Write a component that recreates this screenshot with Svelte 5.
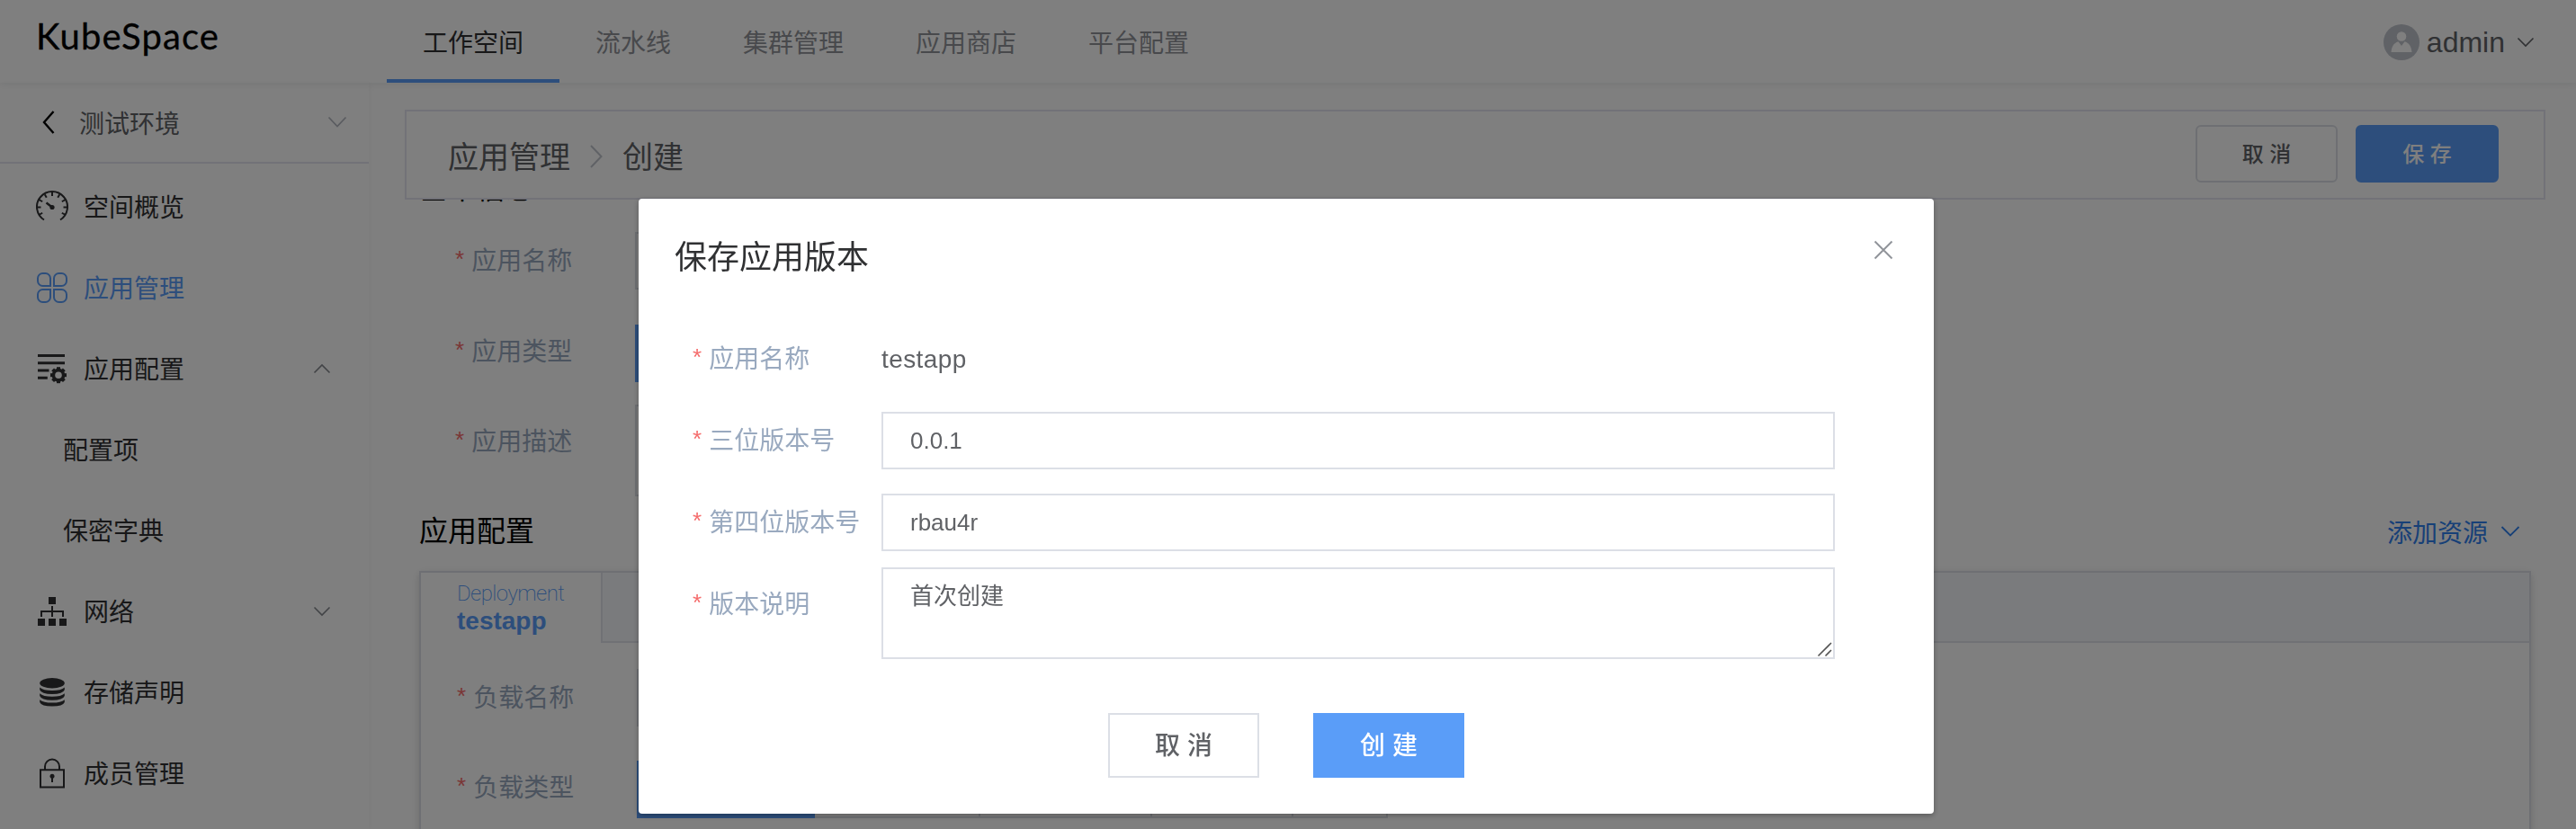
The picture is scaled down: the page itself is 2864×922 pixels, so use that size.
<script>
  const nav = ['工作空间', '流水线', '集群管理', '应用商店', '平台配置'];
  const menu = [
    { icon: 'gauge', label: '空间概览' },
    { icon: 'apps', label: '应用管理', active: true },
    { icon: 'config', label: '应用配置', arrow: 'up' },
    { label: '配置项', sub: true },
    { label: '保密字典', sub: true },
    { icon: 'network', label: '网络', arrow: 'down' },
    { icon: 'disk', label: '存储声明' },
    { icon: 'lock', label: '成员管理' }
  ];
  const ticks = [-180, -150, -120, -90, -60, -30, 0, 30, -210].map((d) => (d * Math.PI) / 180);
  const teeth = [0, 45, 90, 135, 180, 225, 270, 315];
  const segments = [184, 191, 157, 105];
</script>

<div class="page">
  <header>
    <div class="logo">KubeSpace</div>
    <nav>
      {#each nav as item, i}
        <span class:active={i === 0}>{item}</span>
      {/each}
    </nav>
    <div class="user">
      <svg class="avatar" width="40" height="40" viewBox="0 0 40 40">
        <circle cx="20" cy="20" r="20" fill="#c0c4cc" />
        <circle cx="20" cy="13.5" r="5.3" fill="#fff" />
        <path d="M8.5 31C9 24.5 12 20.500 16.500 19.300L20 24l3.500-4.700C28 20.500 31 24.500 31.500 31Z" fill="#fff" />
      </svg>
      <span>admin</span>
      <svg width="20" height="12" viewBox="0 0 20 12" fill="none" stroke="#606266" stroke-width="1.600"><path d="M1.500 1.500L10 10l8.500-8.500" /></svg>
    </div>
  </header>

  <div class="body">
    <aside>
      <div class="space">
        <svg width="16" height="28" viewBox="0 0 16 28" fill="none" stroke="#000" stroke-width="2.400"><path d="M13.500 2L3 14l10.500 12" /></svg>
        <span>测试环境</span>
        <svg width="22" height="14" viewBox="0 0 22 14" fill="none" stroke="#b4b8c0" stroke-width="1.800"><path d="M1.500 1.500L11 11.500l9.500-10" /></svg>
      </div>
      <ul>
        {#each menu as m}
          <li class:active={m.active} class:sub={m.sub}>
            {#if m.icon}
              <svg class="icon" width="36" height="36" viewBox="0 0 36 36" fill="none" stroke="currentColor" stroke-width="2">
                {#if m.icon === 'gauge'}
                  <path d="M9 32.500A17 17 0 1 1 27 32.500" />
                  {#each ticks as a}
                    <path d="M{18 + 16.500 * Math.cos(a)} {18.500 + 16.500 * Math.sin(a)}L{18 + 12.500 * Math.cos(a)} {18.500 + 12.500 * Math.sin(a)}" />
                  {/each}
                  <path d="M11.500 13.500L18 18.500" stroke-width="2.400" />
                  <circle cx="18" cy="18.500" r="2.600" fill="currentColor" stroke="none" />
                {:else if m.icon === 'apps'}
                  <path d="M16 16H7.500A5.500 5.500 0 0 1 2 10.500V7.500A5.500 5.500 0 0 1 7.500 2H10.500A5.500 5.500 0 0 1 16 7.500Z" />
                  <path d="M20 16H28.500A5.500 5.500 0 0 0 34 10.500V7.500A5.500 5.500 0 0 0 28.500 2H25.500A5.500 5.500 0 0 0 20 7.500Z" />
                  <path d="M16 20H7.500A5.500 5.500 0 0 0 2 25.500V28.500A5.500 5.500 0 0 0 7.500 34H10.500A5.500 5.500 0 0 0 16 28.500Z" />
                  <path d="M20 20H28.500A5.500 5.500 0 0 1 34 25.500V28.500A5.500 5.500 0 0 1 28.500 34H25.500A5.500 5.500 0 0 1 20 28.500Z" />
                {:else if m.icon === 'config'}
                  <path d="M2 3.500H32M2 11.700H32M2 20H14.500M2 28.300H12.800" stroke-width="3" />
                  <circle cx="25" cy="25.200" r="5.600" stroke-width="3.600" />
                  {#each teeth as t}
                    <path d="M25 18.800V16.200" stroke-width="4" transform="rotate({t} 25 25.200)" />
                  {/each}
                {:else if m.icon === 'network'}
                  <path d="M14 2h8v8h-8zM2 26h8v8H2zM14 26h8v8h-8zM26 26h8v8h-8z" fill="currentColor" stroke="none" />
                  <path d="M18 12V24M6 24V18H30V24" />
                {:else if m.icon === 'disk'}
                  <g fill="currentColor" stroke="none">
                    <ellipse cx="18" cy="7.700" rx="13.800" ry="5.700" />
                    <path d="M4.200 12.500Q8 16 18 16T31.800 12.500V15.300Q30 20 18 20T4.200 15.300Z" />
                    <path d="M4.200 19.300Q8 22.800 18 22.800T31.800 19.300V22Q30 26.700 18 26.700T4.200 22Z" />
                    <path d="M4.200 26.200Q8 29.600 18 29.600T31.800 26.200V29Q30 33.600 18 33.600T4.200 29Z" />
                  </g>
                {:else}
                  <path d="M5 14.300H31V33.500H5ZM10 14V10.500a8 8 0 0 1 16 0V14" />
                  <circle cx="18" cy="21.300" r="2.500" fill="currentColor" stroke="none" />
                  <path d="M18 22V28" />
                {/if}
              </svg>
            {/if}
            <span>{m.label}</span>
            {#if m.arrow}
              <svg class="arrow" class:up={m.arrow === 'up'} width="20" height="12" viewBox="0 0 20 12" fill="none" stroke="#85888e" stroke-width="1.600"><path d="M1.500 1.500L10 10l8.500-8.500" /></svg>
            {/if}
          </li>
        {/each}
      </ul>
    </aside>

    <main>
      <div class="bar">
        <span>应用管理</span>
        <svg width="16" height="28" viewBox="0 0 16 28" fill="none" stroke="#c0c4cc" stroke-width="2"><path d="M2 2L13.500 14L2 26" /></svg>
        <span>创建</span>
        <div class="actions">
          <button class="small">取 消</button>
          <button class="small primary">保 存</button>
        </div>
      </div>
      <div class="scroll">
        <h3 class="first">基本信息</h3>
        <div class="row r1"><label><i>*</i>应用名称</label><div class="box"></div></div>
        <div class="row r2"><label><i>*</i>应用类型</label><div class="blue"></div></div>
        <div class="row r3"><label><i>*</i>应用描述</label><div class="box tall"></div></div>
        <div class="section">
          <h3>应用配置</h3>
          <span class="add">添加资源
            <svg width="22" height="14" viewBox="0 0 22 14" fill="none" stroke="currentColor" stroke-width="1.800"><path d="M1.500 2L11 11.500L20.500 2" /></svg>
          </span>
        </div>
        <div class="card">
          <div class="tabs">
            <div class="tab"><span>Deployment</span><b>testapp</b></div>
            <div class="rest"></div>
          </div>
          <div class="row c1"><label><i>*</i>负载名称</label><div class="box"></div></div>
          <div class="row c2">
            <label><i>*</i>负载类型</label>
            <div class="blue wide"></div>
            {#each segments as w}<div class="seg" style="width:{w}px"></div>{/each}
          </div>
        </div>
      </div>
    </main>
  </div>
</div>

<div class="mask">
  <div class="dialog">
    <div class="head">
      <h2>保存应用版本</h2>
      <svg width="24" height="24" viewBox="0 0 24 24" fill="none" stroke="#909399" stroke-width="1.900"><path d="M2.500 2.500L21.500 21.500M21.500 2.500L2.500 21.500" /></svg>
    </div>
    <div class="field"><label><i>*</i>应用名称</label><span class="plain">testapp</span></div>
    <div class="field"><label><i>*</i>三位版本号</label><div class="input">0.0.1</div></div>
    <div class="field"><label><i>*</i>第四位版本号</label><div class="input">rbau4r</div></div>
    <div class="field last">
      <label><i>*</i>版本说明</label>
      <div class="input area">
        <span>首次创建</span>
        <svg width="18" height="18" viewBox="0 0 18 18" fill="none" stroke="#555" stroke-width="1.600"><path d="M1.500 16.500L16 2M9.500 16.500L16 10" /></svg>
      </div>
    </div>
    <div class="foot">
      <button>取 消</button>
      <button class="primary">创 建</button>
    </div>
  </div>
</div>

<style>
  :global(body) { margin: 0; background: #fff; overflow: hidden; }
  .page, .mask { font-family: "Liberation Sans", "Noto Sans CJK SC", sans-serif; font-weight: 400; box-sizing: border-box; }
  .page *, .mask * { box-sizing: border-box; }
  h2, h3, ul { margin: 0; padding: 0; list-style: none; font-weight: 400; }
  svg { flex: none; display: block; }
  i { font-style: normal; color: #f56c6c; }
  .page { width: 2864px; height: 922px; overflow: hidden; display: flex; flex-direction: column; background: #fff; }
  header { height: 92px; flex: none; display: flex; position: relative; z-index: 2; box-shadow: 0 2px 8px rgba(0, 21, 41, 0.08); }
  .logo { width: 430px; flex: none; padding-left: 40px; font: 400 40px/81px Lato, sans-serif; letter-spacing: 1.100px; color: #000; -webkit-text-stroke: 0.300px #000; }
  nav { display: flex; font-size: 28px; line-height: 97px; color: #909399; }
  nav span { padding: 0 40px; height: 92px; }
  nav .active { color: #303133; border-bottom: 4px solid #5a9df8; }
  .user { margin-left: auto; padding: 0 46px 0 0; height: 94px; display: flex; align-items: center; color: #606266; font-size: 32px; }
  .user span { margin: 0 13px 0 8px; line-height: 40px; }
  .body { flex: 1; min-height: 0; display: flex; }
  aside { width: 410px; flex: none; box-shadow: 2px 0 6px rgba(0, 0, 0, 0.03); }
  .space { height: 90px; border-bottom: 2px solid #e4e4f0; display: flex; align-items: center; padding: 0 24px 0 46px; font-size: 28px; color: #606266; }
  .space span { margin: 0 auto 0 26px; }
  li { height: 90px; display: flex; align-items: center; padding: 6px 42px 0 40px; font-size: 28px; line-height: 40px; color: #303133; }
  li span { padding-top: 3px; }
  li.active { color: #5a9df8; }
  li.sub { padding-left: 70px; }
  li .icon { margin-right: 17px; }
  .arrow { margin-left: auto; }
  .arrow.up { transform: scaleY(-1); }
  main { flex: 1; min-width: 0; padding: 30px 34px 0 40px; display: flex; flex-direction: column; }
  .bar { height: 100px; flex: none; border: 2px solid #e4e4f0; background: #fff; display: flex; align-items: center; padding: 0 50px 0 46px; font-size: 34px; color: #606266; }
  .bar > svg { margin: 4px 21px 0 21px; }
  .bar > span { padding-top: 1px; }
  .actions { margin: 0 0 2px auto; display: flex; gap: 20px; }
  button { width: 168px; height: 72px; padding: 0; border: 2px solid #dcdfe6; background: #fff; color: #606266; font: 500 28px/69px "Liberation Sans", "Noto Sans CJK SC", sans-serif; }
  button.small { width: 158px; height: 64px; line-height: 59px; font-size: 24px; border-radius: 6px; }
  .small.primary { width: 159px; }
  button.primary { background: #5a9df8; border-color: #5a9df8; color: #fff; }
  .scroll { flex: 1; min-height: 0; overflow: hidden; padding: 0 16px; }
  h3 { font-size: 32px; line-height: 40px; color: #000; }
  .first { margin: -32px 0 28px 0; }
  .row { display: flex; }
  .row label { width: 240px; padding-left: 40px; line-height: 65px; font-size: 28px; color: #99a9bf; flex: none; white-space: nowrap; }
  .row i, .field i { margin-right: 8px; font-size: 26px; line-height: 0; vertical-align: 3px; }
  .box { width: 800px; height: 64px; border: 2px solid #dcdfe6; }
  .box.tall { height: 102px; }
  .blue { width: 150px; height: 64px; background: #5a9df8; }
  .r1 { height: 103px; }
  .r2 { height: 89px; }
  .r2 label, .c2 label { line-height: 61px; }
  .r3 { height: 118px; }
  .r3 label { line-height: 83px; }
  .section { display: flex; justify-content: space-between; align-items: center; height: 45px; padding: 0 12px 0 0; margin-bottom: 22px; }
  .add { display: flex; align-items: center; gap: 14px; font-size: 28px; color: #2f80ee; }
  .card { height: 400px; border: 2px solid #dcdfe6; box-shadow: 0 4px 8px rgba(0, 0, 0, 0.12), 0 0 12px rgba(0, 0, 0, 0.04); }
  .tabs { display: flex; height: 78px; margin-bottom: 29px; }
  .tab { width: 200px; padding: 6px 0 0 40px; color: #5a9df8; display: flex; flex-direction: column; }
  .tab span { font: 200 24px/34px Roboto, sans-serif; letter-spacing: -0.600px; }
  .tab b { font-size: 28px; font-weight: 700; line-height: 27px; }
  .rest { flex: 1; background: #f5f7fa; border: solid #e0e3ea; border-width: 0 0 2px 2px; }
  .card .blue { width: 198px; }
  .c1 { height: 102px; }
  .seg { height: 64px; border: solid #dcdfe6; border-width: 2px 2px 2px 0; }
  .mask { position: fixed; inset: 0; z-index: 10; background: rgba(0, 0, 0, 0.5); }
  .dialog { width: 1440px; height: 684px; margin: 221px 0 0 710px; background: #fff; border-radius: 4px; box-shadow: 0 2px 6px rgba(0, 0, 0, 0.3); padding: 40px 110px 0 60px; }
  .head { display: flex; justify-content: space-between; margin: 0 -66px 66px -20px; height: 48px; }
  .head svg { margin-top: 5px; }
  h2 { font-size: 36px; line-height: 51px; color: #303133; }
  .field { display: flex; height: 91px; align-items: flex-start; }
  .field:nth-child(2) { height: 83px; }
  .field:nth-child(2) label { line-height: 50px; }
  .field:nth-child(4) { height: 82px; }
  .field label { width: 210px; flex: none; font-size: 28px; line-height: 65px; color: #99a9bf; white-space: nowrap; }
  .field.last label { line-height: 83px; }
  .plain { font-size: 28px; line-height: 50px; color: #606266; letter-spacing: 0.400px; }
  .input { flex: 1; height: 64px; border: 2px solid #dcdfe6; padding-left: 30px; font-size: 26px; line-height: 61px; color: #606266; }
  .area { height: 102px; display: flex; line-height: 60px; justify-content: space-between; align-items: flex-end; }
  .area span { align-self: flex-start; }
  .foot { display: flex; justify-content: center; gap: 60px; padding-left: 50px; margin-top: 71px; }
</style>
